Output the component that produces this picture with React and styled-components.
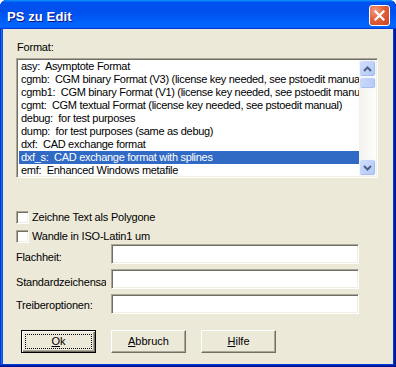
import React from 'react'
import styled, { createGlobalStyle, css } from 'styled-components'

const GlobalStyle = createGlobalStyle`
  * { box-sizing: border-box; }
  html, body { margin: 0; padding: 0; background: #fff; }
  body { font-family: "Liberation Sans", Arial, sans-serif; font-size: 11px; color: #000; }
`

const sunken = css`
  border: 1px solid;
  border-color: #aca899 #fff #fff #aca899;
  padding: 1px;
  box-shadow: inset 1px 1px 0 #716f64, inset -1px -1px 0 #f1efe2;
  background: #fff;
`

const Window = styled.div`
  width: 396px;
  height: 367px;
  display: flex;
  flex-direction: column;
  background: #0a5be6;
  border-radius: 7px 7px 0 0;
  overflow: hidden;
  box-shadow: inset -1px -1px 0 #00138c, inset -2px -2px 0 #001ea0, inset -3px -3px 0 #003bda,
    inset 1px 0 0 #0831d9, inset 2px 0 0 #166aee, inset 3px 0 0 #0855dd;
`

const TitleBar = styled.div`
  height: 29px;
  flex: none;
  display: flex;
  align-items: center;
  justify-content: space-between;
  padding: 0 6px 0 7px;
  background: linear-gradient(to bottom, #0997ff 0%, #0053ee 8%, #0050ee 40%, #0066ff 88%, #0066ff 93%, #005bff 95%, #003dd7 96%, #003dd7 100%);
`

const Title = styled.div`
  padding-top: 4px;
  color: #fff;
  font-weight: bold;
  font-size: 13px;
  text-shadow: 1px 1px 0 #0f1089;
  letter-spacing: 0.1px;
`

const CloseButton = styled.div`
  width: 21px;
  height: 21px;
  margin-top: 2px;
  border: 1px solid #fff;
  border-radius: 3px;
  background: radial-gradient(circle at 28% 25%, #f29b83 0%, #e0603a 45%, #cc4220 100%);
  display: flex;
  align-items: center;
  justify-content: center;
`

const Body = styled.div`
  flex: 1;
  margin: 0 3px 3px;
  background: #ece9d8;
  padding: 12px 15px 0 13px;
  display: flex;
  flex-direction: column;
  letter-spacing: -0.2px;
`

const Label = styled.div`
  line-height: 13px;
  padding-left: 1px;
  margin-bottom: 4px;
`

const ListBox = styled.div`
  ${sunken}
  width: 362px;
  height: 120px;
  display: flex;
`

const Items = styled.div`
  flex: 1;
  min-width: 0;
  padding-left: 1px;
  overflow: hidden;
  letter-spacing: -0.3px;
`

const Item = styled.div`
  height: 13px;
  line-height: 13px;
  padding-left: 2px;
  white-space: pre;
  overflow: hidden;
  ${p => p.selected && css`
    background: #316ac5;
    color: #fff;
  `}
`

const ScrollBar = styled.div`
  width: 17px;
  flex: none;
  display: flex;
  flex-direction: column;
  background: linear-gradient(to right, #f3f1ec, #fefefb);
`

const ScrollButton = styled.div`
  height: 17px;
  flex: none;
  border: 1px solid #f4f7fe;
  border-radius: 3px;
  background: linear-gradient(135deg, #d2defc 0%, #c1d3fb 50%, #b3c8f5 100%);
  box-shadow: inset -1px -1px 0 #a8bdee;
  display: flex;
  align-items: center;
  justify-content: center;
`

const Thumb = styled.div`
  height: 12px;
  flex: none;
  border: 1px solid #f4f7fe;
  border-radius: 3px;
  background: linear-gradient(to right, #c9d8fc, #b8cbf6);
  box-shadow: inset -1px -1px 0 #a8bdee;
`

const Track = styled.div`
  flex: 1;
`

const CheckGroup = styled.div`
  margin-top: 33px;
  display: flex;
  flex-direction: column;
  gap: 6px;
`

const CheckRow = styled.label`
  display: flex;
  align-items: center;
  gap: 3px;
  height: 13px;
  line-height: 13px;
`

const CheckBox = styled.span`
  width: 13px;
  height: 13px;
  flex: none;
  border: 1px solid;
  border-color: #aca899 #fff #fff #aca899;
  box-shadow: inset 1px 1px 0 #716f64, inset -1px -1px 0 #f1efe2;
  background: #fff;
`

const Fields = styled.div`
  margin-top: 1px;
  display: flex;
  flex-direction: column;
  gap: 5px;
`

const FieldRow = styled.div`
  display: flex;
  align-items: flex-start;
  height: 20px;
`

const FieldLabel = styled.div`
  width: 90px;
  flex: none;
  margin-right: 5px;
  padding-top: ${p => p.offset}px;
  line-height: 13px;
  white-space: nowrap;
  overflow: hidden;
`

const TextField = styled.div`
  ${sunken}
  width: 248px;
  height: 20px;
`

const ButtonRow = styled.div`
  margin-top: 16px;
  padding-left: 5px;
  display: flex;
  gap: 15px;
  letter-spacing: 0;
`

const Button = styled.div`
  width: 75px;
  height: 23px;
  display: flex;
  align-items: center;
  justify-content: center;
  line-height: 13px;
  background: #ece9d8;
  border: 1px solid;
  border-color: #fff #716f64 #716f64 #fff;
  box-shadow: inset -1px -1px 0 #aca899;
  ${p => p.primary && css`
    border-color: #000;
    box-shadow: inset 1px 1px 0 #fff, inset -1px -1px 0 #716f64, inset -2px -2px 0 #aca899;
    outline: 1px dotted #000;
    outline-offset: -5px;
  `}
`

const Chevron = ({ up }) => (
  <svg width="9" height="6" viewBox="0 0 9 6">
    <path d={up ? 'M1 5 L4.5 1.5 L8 5' : 'M1 1 L4.5 4.5 L8 1'} fill="none" stroke="#4d6185" strokeWidth="2" />
  </svg>
)

const formats = [
  'asy:  Asymptote Format',
  'cgmb:  CGM binary Format (V3) (license key needed, see pstoedit manual)',
  'cgmb1:  CGM binary Format (V1) (license key needed, see pstoedit manual)',
  'cgmt:  CGM textual Format (license key needed, see pstoedit manual)',
  'debug:  for test purposes',
  'dump:  for test purposes (same as debug)',
  'dxf:  CAD exchange format',
  'dxf_s:  CAD exchange format with splines',
  'emf:  Enhanced Windows metafile',
]

const fields = [
  { label: 'Flachheit:', offset: 7 },
  { label: 'Standardzeichensatz:', offset: 7 },
  { label: 'Treiberoptionen:', offset: 5 },
]

export default function App() {
  return (
    <Window>
      <GlobalStyle />
      <TitleBar>
        <Title>PS zu Edit</Title>
        <CloseButton>
          <svg width="11" height="11" viewBox="0 0 11 11">
            <path d="M1.5 1.5 L9.5 9.5 M9.5 1.5 L1.5 9.5" stroke="#fff" strokeWidth="2.2" strokeLinecap="square" />
          </svg>
        </CloseButton>
      </TitleBar>
      <Body>
        <Label>Format:</Label>
        <ListBox>
          <Items>
            {formats.map((f, i) => (
              <Item key={f} selected={i === 7}>{f}</Item>
            ))}
          </Items>
          <ScrollBar>
            <ScrollButton><Chevron up /></ScrollButton>
            <Thumb />
            <Track />
            <ScrollButton><Chevron /></ScrollButton>
          </ScrollBar>
        </ListBox>
        <CheckGroup>
          <CheckRow><CheckBox />Zeichne Text als Polygone</CheckRow>
          <CheckRow><CheckBox />Wandle in ISO-Latin1 um</CheckRow>
        </CheckGroup>
        <Fields>
          {fields.map(f => (
            <FieldRow key={f.label}>
              <FieldLabel offset={f.offset}>{f.label}</FieldLabel>
              <TextField />
            </FieldRow>
          ))}
        </Fields>
        <ButtonRow>
          <Button primary><u>O</u>k</Button>
          <Button><u>A</u>bbruch</Button>
          <Button><u>H</u>ilfe</Button>
        </ButtonRow>
      </Body>
    </Window>
  )
}
